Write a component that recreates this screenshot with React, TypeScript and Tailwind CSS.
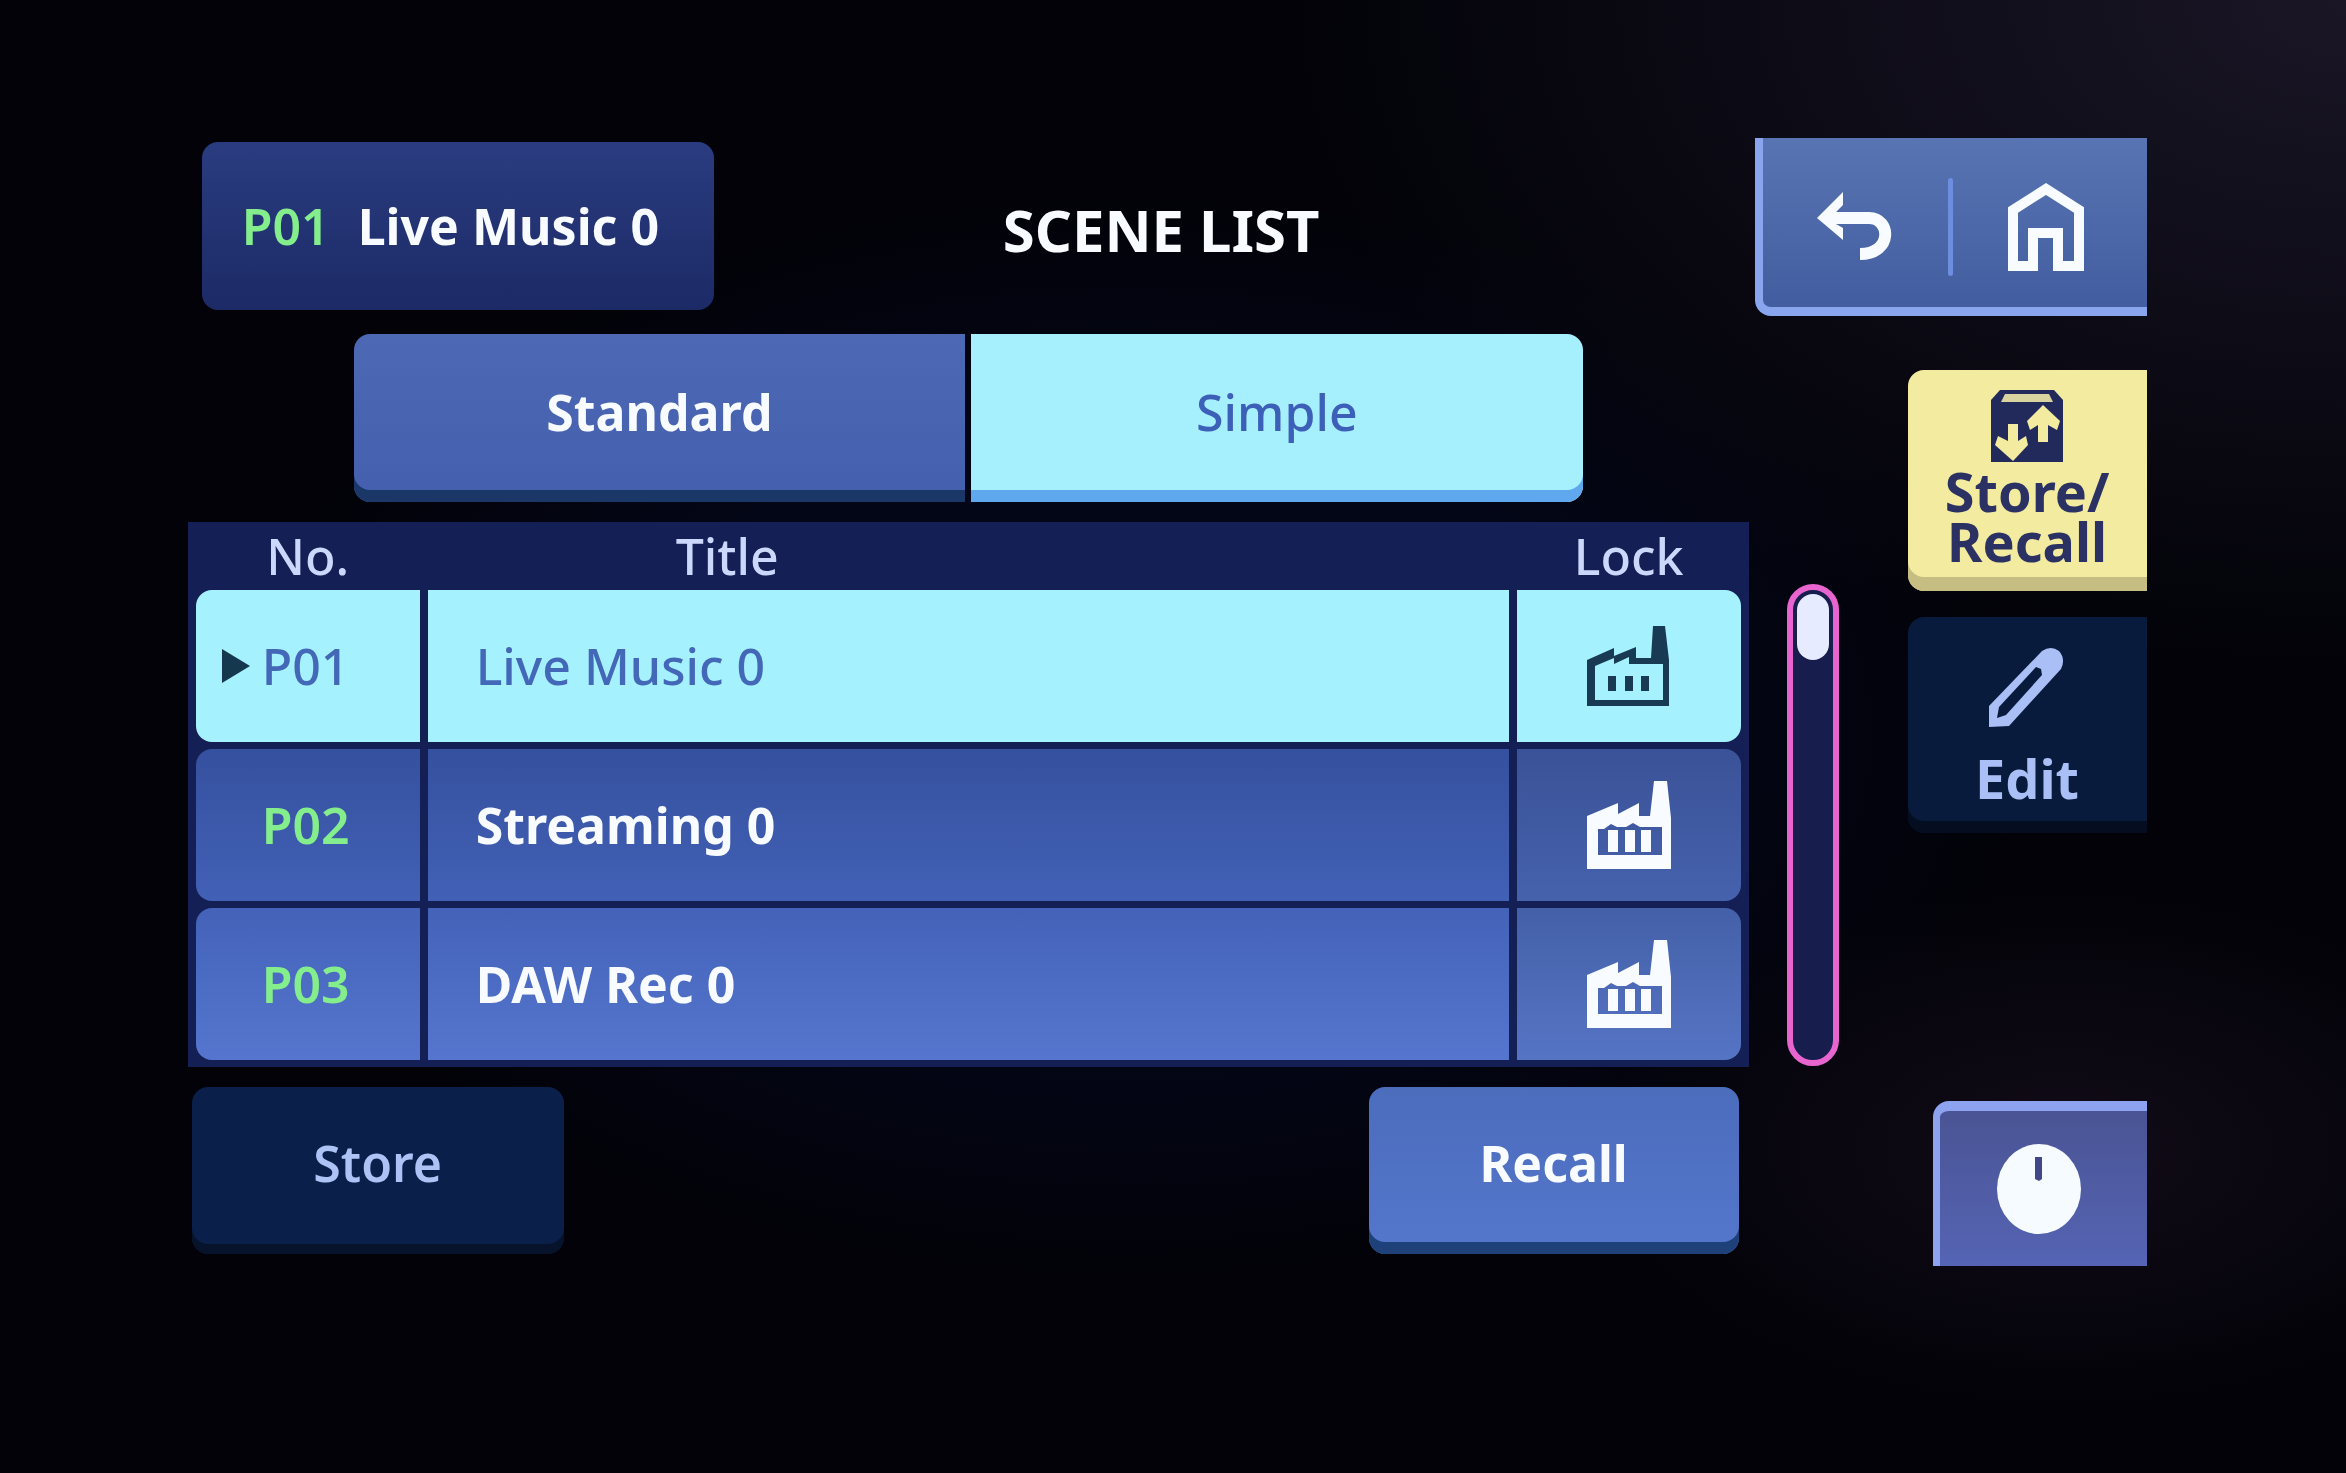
import React, { useState } from 'react';
import clsx from 'clsx';

interface Scene {
    no: string;
    title: string;
}

const SCENES: Scene[] = [
    { no: 'P01', title: 'Live Music 0' },
    { no: 'P02', title: 'Streaming 0' },
    { no: 'P03', title: 'DAW Rec 0' },
];

const ROW_COLORS = [
    'bg-linear-to-b from-[#34509f] to-[#4060b6]',
    'bg-linear-to-b from-[#35509e] to-[#4261b6]',
    'bg-linear-to-b from-[#4362b8] to-[#5675ce]',
];

const LOCK_COLORS = [
    'bg-linear-to-b from-[#3a5296] to-[#4563ae]',
    'bg-linear-to-b from-[#3a5297] to-[#4662ad]',
    'bg-linear-to-b from-[#4460a8] to-[#5574c4]',
];

const BackIcon = () => (
    <svg width="76" height="72" viewBox="0 0 76 72" fill="none" stroke="currentColor" strokeWidth="12" aria-hidden="true">
        <path d="M14 27h38c22 0 24 36-9 36" />
        <path d="M0 27 26 1v13l-7 7v12l7 4v12z" fill="currentColor" stroke="none" />
    </svg>
);

const HomeIcon = () => (
    <svg width="76" height="90" viewBox="0 0 76 90" fill="none" stroke="currentColor" strokeWidth="10" aria-hidden="true">
        <path d="M5 84V28L38 7l33 21v56H50V51H25v33z" />
    </svg>
);

const StoreRecallIcon = () => (
    <svg width="72" height="72" viewBox="0 0 72 72" className="shrink-0" aria-hidden="true">
        <path d="M9 0h54l9 10v62H0V10z" fill="#222a5c" />
        <path d="M14 4h44l4 8H10z" fill="#d9d3a0" />
        <path d="M22 71 4 55l3-9 10 5V34h10v17l8-5 2 9zM52 15l17 16-3 9-9-5v17H47V35l-8 5-3-9z" fill="#f3eca0" />
    </svg>
);

const PencilIcon = () => (
    <svg width="76" height="80" viewBox="0 0 76 80" className="shrink-0" aria-hidden="true">
        <path
            fill="#a9bff5"
            fillRule="evenodd"
            d="M0 80V59L53 4q9-6 17 0 7 8 2 18L20 79zM8 71l9-3 36-40-1-6-5-2L10 60z"
        />
    </svg>
);

const KnobIcon = () => (
    <svg width="84" height="90" viewBox="0 0 84 90" aria-hidden="true">
        <ellipse cx="42" cy="45" rx="42" ry="45" fill="#f6fbff" />
        <path d="M38 13h7v22l-3 2-4-2z" fill="#40488a" />
    </svg>
);

const FactoryIcon = ({ outlined }: { outlined: boolean }) =>
    outlined ? (
        <svg width="84" height="80" viewBox="0 0 84 80" className="inline-block align-middle" role="img" aria-label="Preset">
            <path
                fill="#183a52"
                fillRule="evenodd"
                d="M0 80V34l27-12v8l22-9v11h15l2-32h12l4 34v46zM8 74h68V38H42v-7l-15 7v-6L8 40z"
            />
            <path d="M21 50h8v15h-8zM38 50h8v15h-8zM54 50h8v15h-8z" fill="#183a52" />
        </svg>
    ) : (
        <svg width="84" height="88" viewBox="0 0 84 88" className="inline-block align-middle" role="img" aria-label="Preset">
            <path
                fill="#f8fbff"
                fillRule="evenodd"
                d="M0 88V35l31-13v11l21-11v13h11l4-35h13l4 37v51zM11 74h64V46H53l-7-4-7 4h-9l-6-3-7 5h-6z"
            />
            <path d="M21 49h10v22H21zM38 49h10v22H38zM54 49h10v22H54z" fill="#f8fbff" />
        </svg>
    );

export default function App() {
    const [selected, setSelected] = useState('P01');
    const [mode, setMode] = useState('Simple');

    return (
        <div className="min-h-screen bg-[#020208] bg-[radial-gradient(ellipse_at_100%_0%,#1a1626_0%,transparent_32%),radial-gradient(ellipse_at_88%_78%,#120c18_0%,transparent_16%),radial-gradient(ellipse_at_48%_50%,#030616_30%,transparent_52%)] pt-[138px] pb-16 pl-[8%] pr-[8.5%] font-['Noto_Sans','Open_Sans',sans-serif] text-[50px] leading-none font-bold text-[#f8fbff]">
            <div className="flex">
                <main className="flex-1 min-w-0 pb-3">
                    <header className="flex items-center pt-1 pl-[14px]">
                        <button className="h-[168px] w-[512px] shrink-0 rounded-2xl bg-linear-to-b from-[#2a3c80] to-[#1c2a66] pl-10 flex items-center gap-7 whitespace-nowrap">
                            <span className="font-semibold text-[#85ee8c]">P01</span>
                            <span>Live Music 0</span>
                        </button>
                        <h1 className="flex-1 pr-[140px] pt-2 text-center text-[58px] whitespace-nowrap">SCENE LIST</h1>
                    </header>

                    <div className="mt-6 px-[166px] flex gap-[6px]">
                        {['Standard', 'Simple'].map((m, i) => (
                            <button
                                key={m}
                                onClick={() => setMode(m)}
                                className={clsx(
                                    'h-[168px] flex-1 pb-3',
                                    i === 0 ? 'rounded-l-2xl' : 'rounded-r-2xl',
                                    mode === m
                                        ? 'bg-[#a6effd] font-medium text-[#3c5fb8] shadow-[inset_0_-12px_0_#5fa8ee]'
                                        : 'bg-linear-to-b from-[#4d69b4] to-[#445fae] shadow-[inset_0_-12px_0_#1b3768]'
                                )}
                            >
                                {m}
                            </button>
                        ))}
                    </div>

                    <table id="scenes" className="mt-5 w-full table-fixed border-separate border-spacing-x-[8px] border-spacing-y-[7px] bg-[#141f56]">
                        <thead>
                            <tr className="h-[54px] text-[#ccd8fb]">
                                <th className="w-[224px] p-0 font-medium">No.</th>
                                <th className="p-0 pl-[248px] text-left font-medium">Title</th>
                                <th className="w-[224px] p-0 font-medium">Lock</th>
                            </tr>
                        </thead>
                        <tbody>
                            {SCENES.map((s, i) => {
                                const active = s.no === selected;
                                const cell = active ? 'bg-[#a6f1fe]' : ROW_COLORS[i];
                                return (
                                    <tr key={s.no} onClick={() => setSelected(s.no)} className="h-[152px]">
                                        <td className={clsx('p-0 rounded-l-2xl', cell)}>
                                            <div className={clsx('flex items-center', active ? 'pl-6 gap-3 font-medium text-[#4468b8]' : 'pl-[66px] font-semibold text-[#85ee8c]')}>
                                                {active && (
                                                    <svg width="30" height="34" viewBox="0 0 30 34" aria-hidden="true">
                                                        <path d="M2 0l28 17L2 34z" fill="#16384f" />
                                                    </svg>
                                                )}
                                                {s.no}
                                            </div>
                                        </td>
                                        <td className={clsx('p-0 pl-12', cell, active && 'font-medium text-[#4468b8]')}>{s.title}</td>
                                        <td className={clsx('p-0 rounded-r-2xl text-center', active ? cell : LOCK_COLORS[i])}>
                                            <FactoryIcon outlined={active} />
                                        </td>
                                    </tr>
                                );
                            })}
                        </tbody>
                    </table>

                    <div className="mt-5 pl-1 pr-[10px] flex justify-between">
                        <button className="h-[167px] w-[372px] rounded-2xl bg-[#0a1f49] pb-4 font-semibold text-[#adc3f6] shadow-[inset_0_-10px_0_#06132a]">Store</button>
                        <button className="h-[167px] w-[370px] rounded-2xl bg-linear-to-b from-[#4c6cbc] to-[#5477cc] pb-4 shadow-[inset_0_-12px_0_#1f4179]">Recall</button>
                    </div>
                </main>

                <aside className="w-[398px] shrink-0 flex flex-col">
                    <nav className="ml-[6px] h-[178px] rounded-bl-2xl border-b-[9px] border-l-[8px] border-[#88a5ee] bg-linear-to-b from-[#5974b2] to-[#425ea0] pt-2 pr-2 flex items-center">
                        <button aria-label="Back" className="flex-1 flex justify-center">
                            <BackIcon />
                        </button>
                        <div className="h-[98px] w-[5px] rounded-full bg-[#6c8de0]" />
                        <button aria-label="Home" className="flex-1 flex justify-center">
                            <HomeIcon />
                        </button>
                    </nav>

                    <div className="flex flex-1 justify-between">
                        <div
                            role="scrollbar"
                            aria-label="Scene list"
                            aria-orientation="vertical"
                            aria-controls="scenes"
                            aria-valuenow={0}
                            className="mt-[268px] ml-[38px] h-[482px] w-[52px] rounded-full border-[6px] border-[#e865cf] bg-[#171d4c] p-1"
                        >
                            <div className="h-[66px] rounded-full bg-[#e6ebff]" />
                        </div>

                        <div className="mt-[54px] flex w-[239px] flex-col">
                            <button className="h-[221px] rounded-l-2xl bg-[#f3eca0] pt-5 flex flex-col items-center gap-1 text-[54px] leading-[50px] text-[#2b3263] shadow-[inset_0_-14px_0_#c5bd82]">
                                <StoreRecallIcon />
                                <span>Store/<br />Recall</span>
                            </button>
                            <button className="mt-[26px] h-[216px] rounded-l-2xl bg-[#091b3c] pt-[30px] flex flex-col items-center gap-6 text-[54px] text-[#a9bff5] shadow-[inset_0_-12px_0_#050e20]">
                                <PencilIcon />
                                Edit
                            </button>
                            <button aria-label="Knob" className="mt-auto h-[165px] w-[214px] self-end rounded-tl-2xl border-t-[10px] border-l-[7px] border-[#8ea3f0] bg-linear-to-b from-[#4a5494] to-[#5564b4] pr-2 flex items-center justify-center">
                                <KnobIcon />
                            </button>
                        </div>
                    </div>
                </aside>
            </div>
        </div>
    );
}
